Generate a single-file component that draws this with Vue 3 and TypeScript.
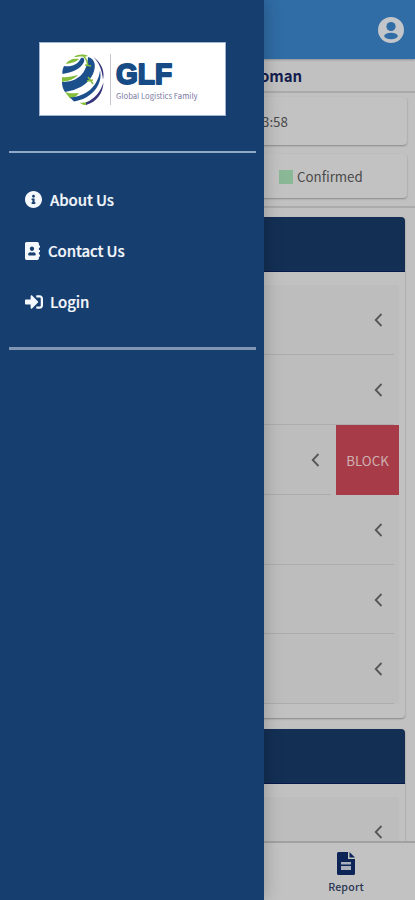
<script setup lang="ts">
interface Row {
  id: number
  blocked?: boolean
}

const rows: Row[] = [{ id: 1 }, { id: 2 }, { id: 3, blocked: true }, { id: 4 }, { id: 5 }, { id: 6 }]
</script>

<template>
  <div class="screen">
    <main class="page">
      <header class="topbar">
        <svg class="avatar" viewBox="0 0 26 26">
          <circle cx="13" cy="13" r="13" fill="#c2c5c9" />
          <circle cx="13" cy="9.500" r="4.600" fill="#306ca5" />
          <ellipse cx="13" cy="19" rx="6.800" ry="3.200" fill="#306ca5" />
        </svg>
      </header>
      <h1 class="title"><span>oman</span></h1>
      <section class="summary">
        <div class="card time"><span>3:58</span></div>
        <div class="card legend"><i class="swatch"></i><span>Confirmed</span></div>
      </section>
      <div class="panels">
        <section class="panel">
          <div class="panel-head"></div>
          <ul class="rows">
            <li v-for="row in rows" :key="row.id" class="row">
              <div class="row-body">
                <svg class="chevron" viewBox="0 0 9 14"><path d="M7.500 1 1.700 7l5.800 6" /></svg>
              </div>
              <button v-if="row.blocked" class="block">BLOCK</button>
            </li>
          </ul>
        </section>
        <section class="panel">
          <div class="panel-head"></div>
          <ul class="rows">
            <li class="row">
              <div class="row-body">
                <svg class="chevron" viewBox="0 0 9 14"><path d="M7.500 1 1.700 7l5.800 6" /></svg>
              </div>
            </li>
          </ul>
        </section>
      </div>
      <nav class="tabs">
        <div class="tab">
          <svg class="report" viewBox="0 0 18 23">
            <path d="M1.500 0H11v7h7v14.500a1.500 1.500 0 0 1-1.500 1.500h-15A1.500 1.500 0 0 1 0 21.500v-20A1.500 1.500 0 0 1 1.500 0z" fill="#0d2556" />
            <path d="M12.500 0 18 5.500h-5.500z" fill="#0d2556" />
            <path d="M4 10h10v2.600H4zM4 14h10v4H4z" fill="#a9b0bc" />
          </svg>
          <span>Report</span>
        </div>
      </nav>
    </main>

    <aside class="drawer">
      <div class="brand">
        <div class="logo">
          <svg class="globe" viewBox="0 0 42 51">
            <g fill="#84bd3b">
              <path d="M4 10C6 6 11 4 17 5c-3 3-7 4-13 5z" />
              <path d="M12 3c4-3 10-3 14-1l-4 1c-3-1-6 0-10 0z" />
              <path d="M0 23c5 1 10-1 16-2-4 4-9 6-16 7z" />
              <path d="M3 38c5 2 9 1 14 1-2 3-5 5-9 5.500z" />
              <path d="M18 48.500c3 .5 6 0 9-1.500l-3 4c-2 0-5-.5-6-2.500z" />
            </g>
            <g fill="#1b508d">
              <path d="M2 12c7 1 14-1 17-8 2-1 4 0 3 4C18 16 10 18 .5 20 0 17 1 14 2 12z" />
              <path d="M0 28c15 0 25-8 26-25 8 2 8 10 5 17-5 11-16 16-28 18C1 35 0 32 0 28z" />
              <path d="M8 43.500c16-1 28-11 30-27 3 13-7 28-26 31z" />
            </g>
            <g fill="#35347c">
              <path d="M31 2.500c8 6 12 14 10 23-1-10-4-17-10-23z" />
              <path d="M24 48.500c9-4 14-10 17.500-20C41 39 35 48 24 51z" />
            </g>
            <path d="M22 3c3 2 3 5 4 9M23 11l6 1M26 23l5 7M25 27l6-1" fill="none" stroke="#84bd3b" stroke-width="1.500" />
          </svg>
          <i class="rule"></i>
          <div class="words">
            <svg class="wordmark" viewBox="0 0 58 27">
              <text x="0" y="24" textLength="56" lengthAdjust="spacingAndGlyphs">GLF</text>
            </svg>
            <small>Global Logistics Family</small>
          </div>
        </div>
      </div>
      <ul class="menu">
        <li>
          <svg class="info" viewBox="8 8 496 496"><path d="M256 8C119.043 8 8 119.083 8 256c0 136.997 111.043 248 248 248s248-111.003 248-248C504 119.083 392.957 8 256 8zm0 110c23.196 0 42 18.804 42 42s-18.804 42-42 42-42-18.804-42-42 18.804-42 42-42zm56 254c0 6.627-5.373 12-12 12h-88c-6.627 0-12-5.373-12-12v-24c0-6.627 5.373-12 12-12h12v-64h-12c-6.627 0-12-5.373-12-12v-24c0-6.627 5.373-12 12-12h64c6.627 0 12 5.373 12 12v100h12c6.627 0 12 5.373 12 12v24z" /></svg>
          <span>About Us</span>
        </li>
        <li>
          <svg class="book" viewBox="0 0 448 512" preserveAspectRatio="none"><path d="M436 160c6.600 0 12-5.400 12-12v-40c0-6.600-5.400-12-12-12h-20V48c0-26.500-21.500-48-48-48H48C21.500 0 0 21.500 0 48v416c0 26.500 21.500 48 48 48h320c26.500 0 48-21.500 48-48v-48h20c6.600 0 12-5.400 12-12v-40c0-6.600-5.400-12-12-12h-20v-64h20c6.600 0 12-5.400 12-12v-40c0-6.600-5.400-12-12-12h-20v-64h20zm-228-32c35.300 0 64 28.700 64 64s-28.700 64-64 64-64-28.700-64-64 28.700-64 64-64zm112 236.800c0 10.600-10 19.200-22.400 19.200H118.400C106 384 96 375.400 96 364.800v-19.200c0-31.800 30.100-57.600 67.200-57.600h5c12.300 5.100 25.700 8 39.800 8s27.600-2.900 39.800-8h5c37.100 0 67.200 25.800 67.200 57.600v19.200z" /></svg>
          <span>Contact Us</span>
        </li>
        <li>
          <svg class="signin" viewBox="0 64 512 384"><path d="M416 448h-84c-6.600 0-12-5.400-12-12v-40c0-6.600 5.400-12 12-12h84c17.700 0 32-14.300 32-32V160c0-17.700-14.300-32-32-32h-84c-6.600 0-12-5.400-12-12V76c0-6.600 5.400-12 12-12h84c53 0 96 43 96 96v192c0 53-43 96-96 96zm-47-209L201 71c-15-15-41-4.500-41 17v96H24c-13.300 0-24 10.700-24 24v96c0 13.300 10.700 24 24 24h136v96c0 21.500 26 32 41 17l168-168c9.300-9.400 9.300-24.600 0-34z" /></svg>
          <span>Login</span>
        </li>
      </ul>
    </aside>
  </div>
</template>

<style>
body {
  margin: 0;
}
</style>

<style scoped>
* {
  box-sizing: border-box;
}
.screen {
  position: relative;
  width: 415px;
  height: 900px;
  overflow: hidden;
  font-family: "Noto Sans CJK SC", "Noto Sans", sans-serif;
  background: #c1c1c1;
}
.page {
  height: 900px;
  display: flex;
  flex-direction: column;
}
.topbar {
  flex: none;
  height: 59px;
  padding-right: 11px;
  display: flex;
  align-items: center;
  justify-content: flex-end;
  background: #306ca5;
  box-shadow: 0 1px 2px #8e9499;
}
.avatar {
  width: 26px;
  height: 26px;
}
.title {
  flex: none;
  margin: 0;
  height: 34px;
  padding-left: 260px;
  border-bottom: 2px solid #aaa;
  font-size: 15px;
  line-height: 33px;
  font-weight: 700;
  letter-spacing: -0.1px;
  color: #131d4e;
}
.summary {
  flex: none;
  height: 115px;
  padding: 4px 8px 0 8px;
  display: flex;
  flex-direction: column;
  gap: 9px;
  border-bottom: 2px solid #ababab;
}
.card {
  display: flex;
  align-items: center;
  border-radius: 4px;
  background: #c2c2c2;
  box-shadow: 0 1px 2px #888;
  font-size: 13.300px;
  line-height: 20px;
  color: #494949;
}
.time {
  height: 48px;
  padding: 2px 0 0 254px;
}
.legend {
  height: 44px;
  padding: 1px 0 0 271px;
}
.swatch {
  width: 14px;
  height: 14px;
  margin-right: 4px;
  background: #8ab796;
}
.panels {
  flex: 1;
  min-height: 0;
  overflow: hidden;
  padding: 9px 10px 0 8px;
  display: flex;
  flex-direction: column;
  gap: 11px;
}
.panel {
  flex: none;
  padding-bottom: 14px;
  border-radius: 4px;
  background: #c1c1c1;
  box-shadow: 0 1px 2px #858585;
}
.panel-head {
  height: 55px;
  border-radius: 4px 4px 0 0;
  background: #132f54;
  border-bottom: 1px solid #07194b;
}
.rows {
  margin: 13px 6px 0 0;
  padding: 0;
  list-style: none;
  background: #bdbdbd;
}
.row {
  height: 69.900px;
  display: flex;
}
.row-body {
  flex: 1;
  margin-right: 5px;
  padding-right: 11px;
  display: flex;
  align-items: center;
  justify-content: flex-end;
  border-bottom: 1px solid #acacac;
}
.chevron {
  width: 9px;
  height: 14px;
  margin-top: 1px;
  fill: none;
  stroke: #565656;
  stroke-width: 1.800;
}
.block {
  width: 63px;
  height: 70px;
  padding: 2px 0 0;
  border: 0;
  background: #a73c48;
  color: #cdb0b1;
  font-family: inherit;
  font-size: 13.300px;
}
.tabs {
  flex: none;
  height: 59px;
  padding-left: 277px;
  border-top: 2px solid #a1a1a1;
  background: #c2c2c2;
}
.tab {
  width: 138px;
  padding-top: 9px;
  display: flex;
  flex-direction: column;
  align-items: center;
  font-size: 10.600px;
  line-height: 16px;
  font-weight: 500;
  letter-spacing: 0.2px;
  color: #293654;
}
.report {
  width: 18px;
  height: 23px;
  margin-bottom: 4px;
}
.drawer {
  position: absolute;
  top: 0;
  left: 0;
  width: 264px;
  height: 900px;
  padding: 0 8px 0 9px;
  background: #163f70;
  box-shadow: 0 0 16px rgba(0, 0, 0, 0.25);
}
.brand {
  height: 153px;
  padding: 42px 0 0 30px;
  border-bottom: 2px solid #91a9c8;
}
.logo {
  width: 187px;
  height: 74px;
  padding: 11px 0 0 23px;
  display: flex;
  align-items: flex-start;
  background: #fff;
  border: 1px solid #a4b5cf;
  box-shadow: 0 0 1px #08265a;
}
.globe {
  flex: none;
  width: 42px;
  height: 51px;
  margin-left: -1px;
}
.rule {
  width: 1px;
  height: 51px;
  margin: 0 5px 0 6px;
  background: #c4c4d0;
}
.words {
  display: flex;
  flex-direction: column;
}
.wordmark {
  width: 58px;
  height: 27px;
  margin-top: 6px;
  overflow: visible;
  font-family: "Liberation Sans", sans-serif;
  font-size: 30px;
  font-weight: 700;
  fill: #174b86;
  stroke: #174b86;
  stroke-width: 2;
  stroke-linejoin: round;
}
.words small {
  margin-top: 3px;
  font-size: 7.700px;
  line-height: 12px;
  white-space: nowrap;
  color: #7c799f;
}
.menu {
  height: 197px;
  margin: 0;
  padding: 21px 0 0 16px;
  list-style: none;
  border-bottom: 3px solid #8195b5;
}
.menu li {
  height: 51px;
  display: flex;
  align-items: center;
  color: #f4f7fb;
  font-size: 15px;
  line-height: 24px;
  font-weight: 500;
  letter-spacing: -0.1px;
  -webkit-text-stroke: 0.200px #f4f7fb;
}
.menu svg {
  flex: none;
  fill: #f5f8fc;
}
.info {
  width: 17px;
  height: 17px;
  margin-right: 8px;
}
.book {
  width: 15px;
  height: 18px;
  margin-right: 8px;
}
.signin {
  width: 18px;
  height: 14px;
  margin-right: 7px;
}
</style>
